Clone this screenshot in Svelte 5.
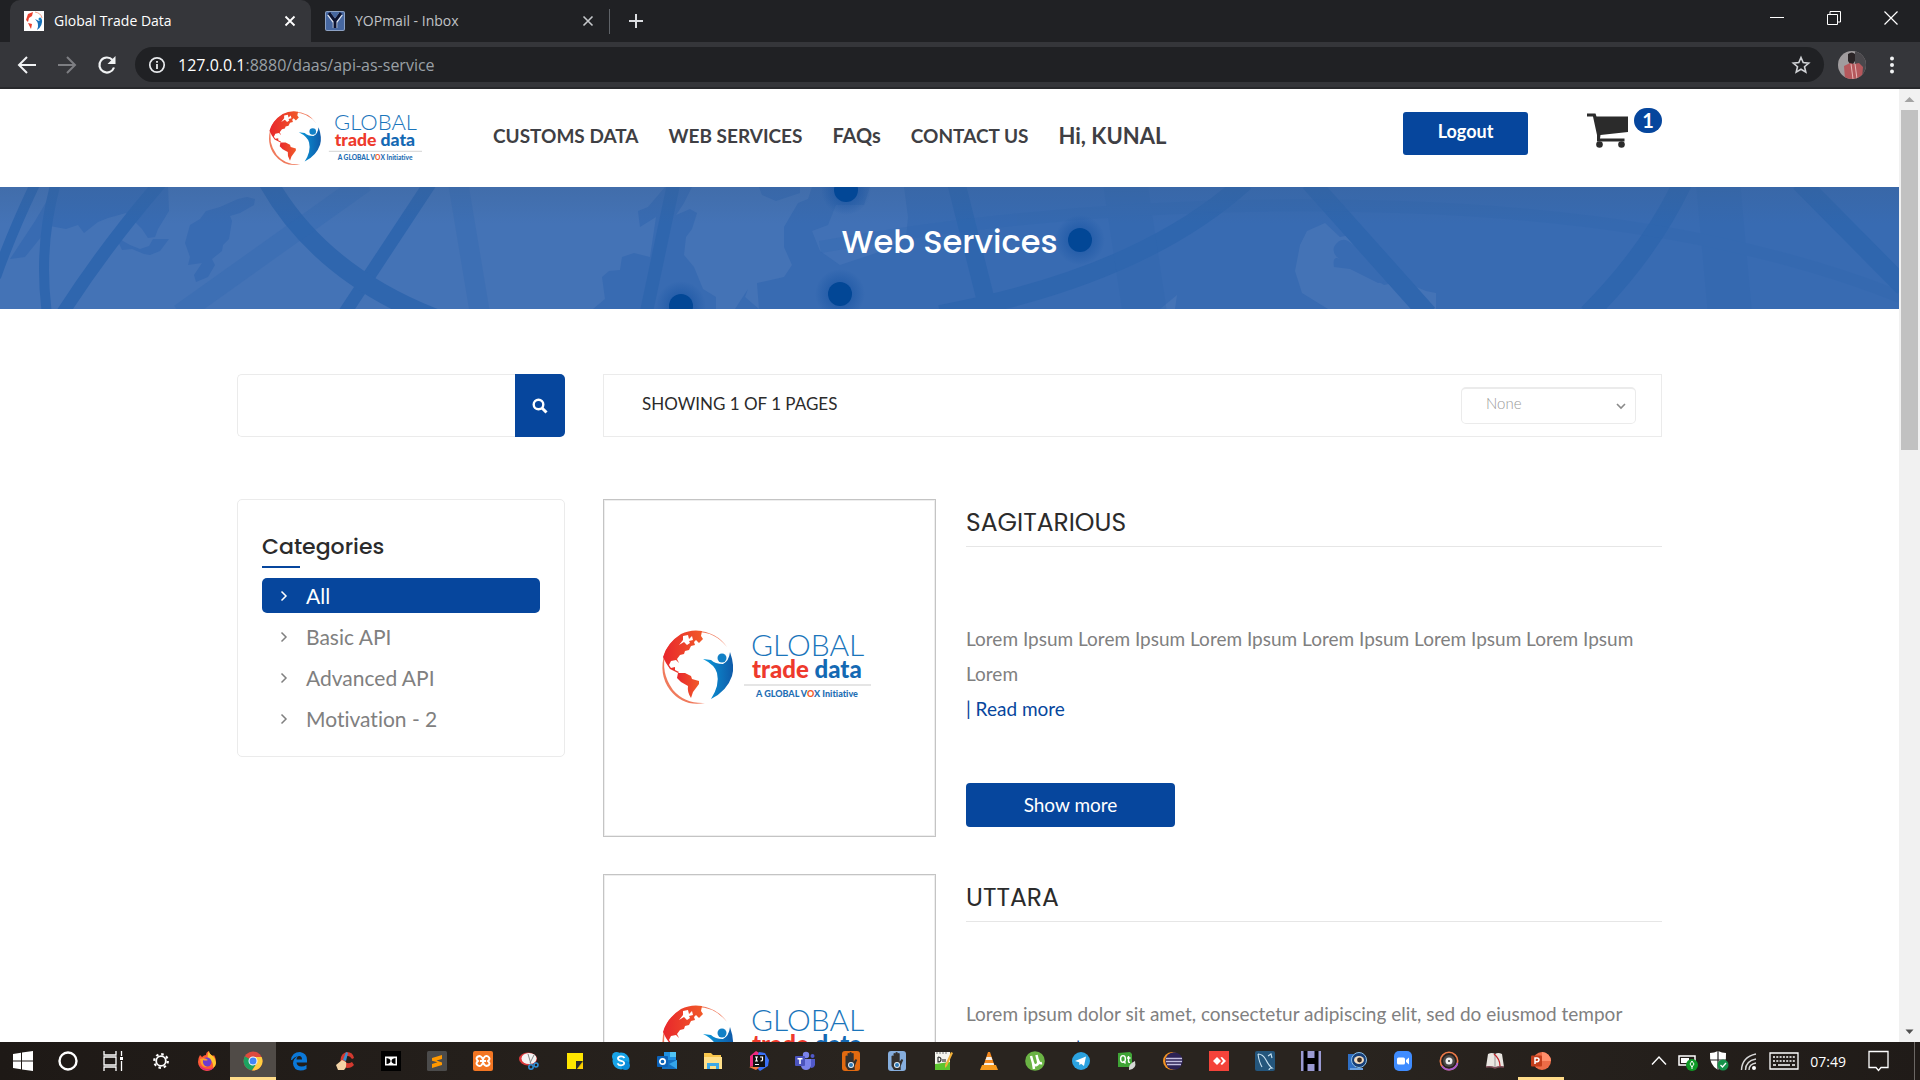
<script>
  const navLinks = [
    { label: 'CUSTOMS DATA', kind: '' },
    { label: 'WEB SERVICES', kind: '' },
    { label: 'FAQs', kind: 'faq' },
    { label: 'CONTACT US', kind: '' },
    { label: 'Hi, KUNAL', kind: 'hello' }
  ];

  const categories = ['All', 'Basic API', 'Advanced API', 'Motivation - 2'];
  let selected = $state('All');
  let query = $state('');
  let sort = $state('None');

  const products = [
    {
      name: 'SAGITARIOUS',
      text: 'Lorem Ipsum Lorem Ipsum Lorem Ipsum Lorem Ipsum Lorem Ipsum Lorem Ipsum Lorem',
      broken: true
    },
    {
      name: 'UTTARA',
      text: 'Lorem ipsum dolor sit amet, consectetur adipiscing elit, sed do eiusmod tempor incididunt ut',
      broken: false
    }
  ];

  const icon = (body) =>
    `<svg width="20" height="20" viewBox="0 0 20 20" fill="none" aria-hidden="true">${body}</svg>`;

  const hand = (bg) =>
    `<rect x="1" width="18" height="20" rx="3" fill="${bg}"/><path d="M4.500 11V5q1-1 2 0V9V2.500q1-1 2 0V8V1.500q1.200-1 2.200 0V8V2.500q1-1 2 0V10.500l2-2.500 1.500 1-2.500 6v4H7L4.500 15z" fill="#33302e"/><circle cx="10" cy="14" r="3" fill="#e8eef5"/><circle cx="10" cy="14" r="2" fill="#2b78b5"/>`;

  const system = [
    {
      name: 'Start',
      art: icon('<path d="M0 3l8-1.200v7.700H0zM9 1.600L20 0v9.500H9zM0 10.500h8v7.700L0 17zM9 10.500h11V20L9 18.400z" fill="#fff"/>')
    },
    { name: 'Cortana', art: icon('<circle cx="10" cy="10" r="8.500" stroke="#fff" stroke-width="2.400"/>') },
    {
      name: 'Task View',
      art: icon('<path d="M1 0v4h12V0M1 20v-4h12v4M1 6h12v8H1zM18.500 0v5M18.500 10v10" stroke="#fff" stroke-width="1.300"/><path d="M17 6h3v3h-3z" fill="#fff"/>')
    }
  ];

  const apps = [
    {
      name: 'Settings',
      art: icon('<circle cx="10" cy="10" r="4.800" stroke="#fff" stroke-width="1.800"/><circle cx="10" cy="10" r="6.800" stroke="#fff" stroke-width="2.200" stroke-dasharray="2.500 2.840"/>')
    },
    {
      name: 'Firefox',
      art: icon('<path d="M3 4l2 2q2-2 4-2 0-3 3-4 0 3 4 5l1-1q2 3 2 7a9 9 0 0 1-18 0q0-4 2-7z" fill="#ff5a36"/><path d="M12 0q0 3 4 5 3 3 3 7 0 3-3 5 1-7-5-9-1-5 1-8z" fill="#ffc72e"/><circle cx="10" cy="11" r="4.500" fill="#6f3bd1"/><path d="M3 8q5-2 8 1-3 1-5 0-1 5 4 7-6 1-7-8z" fill="#ffa02e"/><path d="M2 14q2 5 8 5.500 5 0 7-3-8 4-15-2.500z" fill="#e3267c"/>')
    },
    {
      name: 'Chrome',
      active: true,
      open: true,
      art: icon('<circle cx="10" cy="10" r="9.500" fill="#dd4b3e"/><path d="M10 10L1.800 5.300A9.500 9.500 0 0 0 9 19.500L14 12z" fill="#1da260"/><path d="M10 6h8.600A9.500 9.500 0 0 1 9 19.500L14 12z" fill="#ffcd40"/><circle cx="10" cy="10" r="4.500" fill="#fff"/><circle cx="10" cy="10" r="3.500" fill="#4285f4"/>')
    },
    {
      name: 'Edge',
      art: icon('<path d="M2 9q1-8 9-8 7 1 7 8v2.500H7.500q.5 4 5 4 2.500 0 5-1.500v4q-3 1.500-6 1.500-7-.5-7.500-7 0-5 5-7.500-4 1-6 4zM7.500 8.500H13q0-3.500-2.700-3.500-2.500.2-2.800 3.500z" fill="#0b78d8"/>')
    },
    {
      name: 'CCleaner',
      art: icon('<path d="M19 7q-1-6-7-6-6 1-6.500 8 .5 7 7 8 4 0 6.500-3l-2-3q-5 3-7-1-1-5 3-5 2 0 4 3z" fill="#d3392f"/><path d="M11 1l2 1-2 8-3-1z" fill="#3a8fd0"/><path d="M1 14l6-5 4 2q1 5-2 8H3z" fill="#f3d3a6"/>')
    },
    {
      name: 'Dolby',
      art: icon('<path d="M0 0h20v20H0z" fill="#000"/><path d="M4 5.500h12v9H4z" fill="#fff"/><path d="M5.500 7q4 .5 4 3t-4 3zM14.500 7q-4 .5-4 3t4 3z" fill="#000"/>')
    },
    {
      name: 'Sublime Text',
      art: icon('<rect width="20" height="20" rx="1.500" fill="#4b4b4b"/><path d="M5 7l10-3v4L9.500 9.600 15 11.500V14L5 17v-4l5.500-1.700L5 9.800z" fill="#ff9800"/>')
    },
    {
      name: 'XAMPP',
      art: icon('<rect width="20" height="20" rx="2" fill="#f37623"/><path d="M10 8.500q-2-4.500-5-3t0 4.500q-3 2.500 0 4.500t5-3q2 4.500 5 3t0-4.500q3-2.500 0-4.500t-5 3zM7 10h6" stroke="#fff" stroke-width="2"/>')
    },
    {
      name: 'Snipping Tool',
      art: icon('<ellipse cx="9" cy="8" rx="9" ry="6.500" fill="#d9383a"/><ellipse cx="10" cy="7.500" rx="7.500" ry="5.500" fill="#f3f3f3"/><path d="M9 3l3 10M15 4l-4 8" stroke="#888"/><circle cx="12" cy="16" r="2.200" stroke="#2d8fd8" stroke-width="1.500"/><circle cx="17" cy="14" r="2" stroke="#2d8fd8" stroke-width="1.500"/>')
    },
    {
      name: 'Sticky Notes',
      art: icon('<path d="M2 2h16v9l-6 7H2z" fill="#ffe600"/><path d="M11 18v-8h7l-6 8z" fill="#2a2a2a"/><path d="M18 11v7h-6z" fill="#ffd000"/>')
    },
    {
      name: 'Skype',
      art: icon('<circle cx="10" cy="10" r="8.500" fill="#18a4e8"/><circle cx="5.500" cy="5.500" r="4.500" fill="#18a4e8"/><circle cx="14.500" cy="14.500" r="4.500" fill="#0b8bd8"/><path d="M13.500 7q-1-1.800-3.600-1.700-3 .2-2.900 2.200 0 1.700 3 2.300t3.200 2.300q0 2-3 2.200-2.700 0-3.700-2" stroke="#fff" stroke-width="1.800"/>')
    },
    {
      name: 'Outlook',
      art: icon('<path d="M7 1h12v9H7z" fill="#1f8fe0"/><path d="M13 1h6v5h-6z" fill="#50c4f5"/><path d="M5 9l15 0v9H5z" fill="#1470c0"/><path d="M20 9v9L12 13z" fill="#35a5ea"/><rect y="5" width="11" height="11" rx="1" fill="#0c62b8"/><circle cx="5.500" cy="10.500" r="2.700" stroke="#fff" stroke-width="1.700"/>')
    },
    {
      name: 'File Explorer',
      art: icon('<path d="M1 2h7l2 2h8v14H1z" fill="#f8c64c"/><path d="M1 6h18v12H1z" fill="#ffe08a"/><path d="M4 18v-6h12v6h-3v-3H7v3z" fill="#3ca8e8"/>')
    },
    {
      name: 'IntelliJ IDEA',
      art: icon('<path d="M1 5L7 0l5 3-3 10-8 3z" fill="#f0287e"/><path d="M10 1l6 1 4 7-1 6-8 5-6-6z" fill="#3a70f5"/><path d="M0 16l7 3 6-5z" fill="#f47a3a"/><path d="M4 4h12v12H4z" fill="#111"/><path d="M6 6h3M7.500 6v4M6 10h3M11 6h2.500v3q0 1-2 1M6 13.500h4" stroke="#fff" stroke-width="1.200"/>')
    },
    {
      name: 'Teams',
      art: icon('<circle cx="11" cy="4" r="3.200" fill="#7b83eb"/><circle cx="17.500" cy="5" r="2" fill="#5059c9"/><path d="M13 8h7v6q-1 3-4 3z" fill="#5059c9"/><path d="M6 8h10v7q-1 4-5 4t-5-4z" fill="#7b83eb"/><rect y="5" width="10" height="10" rx="1" fill="#4b53bc"/><path d="M2.500 7.700h5M5 7.700v5.300" stroke="#fff" stroke-width="1.500"/>')
    },
    { name: 'Android Tool', art: icon(hand('#e26a10')) },
    { name: 'Android Viewer', art: icon(hand('#86aedd')) },
    {
      name: 'Notepad++',
      art: icon('<path d="M2 1h15v18H2z" fill="#f5f5ee"/><path d="M2 13l15-2v8H2z" fill="#5cc42e"/><path d="M4 1v2M7 1v2M10 1v2M13 1v2" stroke="#777"/><path d="M5 6v5q3 0 3-2.500T5 6M10 8v3M12 8v3" stroke="#333" stroke-width="1.200"/><path d="M18 1l2 1-6 13-2 2v-3z" fill="#f2b13a"/>')
    },
    {
      name: 'VLC',
      art: icon('<path d="M9 1h2l5 15H4z" fill="#f58a1f"/><path d="M7.600 6h4.800l1 3H6.500zM5.500 12h9l.8 2.500H4.600z" fill="#f4f0ea"/><path d="M3 14h14l2 5H1z" fill="#f79a1d"/>')
    },
    {
      name: 'uTorrent',
      art: icon('<circle cx="10" cy="10" r="9.800" fill="#6ab344"/><path d="M6 5l2 7q1 3 3.500 2T13 10l-1.500-6M13 9q1 4 4 3M8 12l1 6" stroke="#fff" stroke-width="2.500"/>')
    },
    {
      name: 'Telegram',
      art: icon('<circle cx="10" cy="10" r="9" fill="#2ba2df"/><path d="M4 10l11-4.500-2 9.500-3-2.200-1.500 1.500-.3-3z" fill="#fff"/>')
    },
    {
      name: 'Qt Creator',
      art: icon('<path d="M1 2l12-1 2 2v13H1z" fill="#3fa436"/><ellipse cx="6" cy="8" rx="2.400" ry="3.400" stroke="#fff" stroke-width="1.400"/><path d="M6.500 10l2 2.500M11.500 5v5.500q0 1 1.500.8M10 7h3.500" stroke="#fff" stroke-width="1.400"/><path d="M18 10q2 8-6 9-1-6 6-9z" fill="#d5d8d5"/>')
    },
    {
      name: 'Eclipse',
      art: icon('<circle cx="9" cy="10" r="9" fill="#f39422"/><circle cx="11" cy="10" r="8.800" fill="#2c2255"/><path d="M3 7.500h16M3 10.500h16M4 13.500h14" stroke="#c4bfe0" stroke-width="1.700"/>')
    },
    {
      name: 'AnyDesk',
      art: icon('<path d="M0 0h20v20H0z" fill="#f4433a"/><path d="M8 6l4 4-4 4-4-4zM11.500 6.500L13 6l4 4-4 4-1.500-1L14 10z" fill="#fff"/>')
    },
    {
      name: 'MySQL Workbench',
      art: icon('<rect width="20" height="20" rx="2" fill="#24567c"/><path d="M3 3q5 0 8 6t6 8q-3 0-3 2M3 3q1 8 4 13M13 5l3-2 1 4" stroke="#c9e3f2" stroke-width="1.100"/>')
    },
    {
      name: 'HeidiSQL',
      art: icon('<path d="M0 0h20v20H0z" fill="#000"/><path d="M0 0h2.500v20H0zM6.500 0h7v7h-7zM6.500 13h7v7h-7zM17.500 0H20v20h-2.500z" fill="#9a9ad2"/>')
    },
    {
      name: 'Screen Viewer',
      art: icon('<path d="M1 3h8v16H1z" fill="#2f6fc4"/><circle cx="12" cy="9" r="7.500" fill="#173f78" stroke="#8cc0e8"/><ellipse cx="12" cy="9" rx="5" ry="4" fill="#f2dcc0"/><circle cx="12.500" cy="9" r="2.400" fill="#3a2a20"/><path d="M3 18h13" stroke="#6aa0e0" stroke-width="2"/>')
    },
    {
      name: 'Zoom',
      art: icon('<rect x="1" width="18" height="20" rx="5" fill="#3f8cff"/><rect x="4" y="6.500" width="8" height="7" rx="1.500" fill="#fff"/><path d="M13 9l3-2.500v7L13 11z" fill="#fff"/>')
    },
    {
      name: 'Groove Music',
      art: icon('<circle cx="10" cy="10" r="8.700" stroke="#ee7a48" stroke-width="1.600"/><path d="M3 15a8.700 8.700 0 0 0 15.500-3" stroke="#a55bd0" stroke-width="1.800"/><circle cx="10" cy="10" r="6" fill="#4c4a48"/><circle cx="10" cy="10" r="3.500" fill="#eee"/><circle cx="10" cy="10" r="1" fill="#333"/>')
    },
    {
      name: 'Dictionary',
      art: icon('<path d="M3 3q4-2 7 0 3-2 7 0l2 13q-5-1-9 1-4-2-9-1z" fill="#e9e6e1"/><path d="M10 3v13" stroke="#999"/><path d="M9 3q6 5 6 12" stroke="#c2262c" stroke-width="1.300"/><path d="M1 16q5-1 9 1 4-2 9-1" stroke="#7a4a55" stroke-width="1.500"/>')
    },
    {
      name: 'PowerPoint',
      open: true,
      art: icon('<circle cx="11" cy="10" r="9" fill="#ed6c47"/><path d="M11 1a9 9 0 0 1 9 9h-9z" fill="#ff8f6b"/><rect y="4.500" width="11" height="11" rx="1" fill="#c43e1c"/><path d="M4 13V7h2q2 0 2 1.800T6 10.700H4" stroke="#fff" stroke-width="1.500"/>')
    }
  ];
</script>

{#snippet logo(id)}
  <svg class="logo" viewBox="0 0 210 74" role="img" aria-label="Global Trade Data">
    <defs>
      <linearGradient id="{id}-land" x1="0" x2="1">
        <stop offset="0" stop-color="#e8262c" />
        <stop offset="1" stop-color="#f15a29" />
      </linearGradient>
      <linearGradient id="{id}-body" x1="0" x2="1">
        <stop offset="0" stop-color="#0a9bdc" />
        <stop offset="1" stop-color="#0f5aa8" />
      </linearGradient>
    </defs>
    <path d="M66 17A36 36 0 0 0 36 1Q14 2 4 22Q-3 44 9 60Q22 77 44 73Q24 74 12 60Q-1 42 5 22Q15 2 36 2Q54 2 66 17z" fill="#f07a5c" />
    <path
      d="M20 4Q30-1 41 1L40 6L42 9L38 13L35 10L33 12L34 15L30 16L28 20L24 21L23 24L19 25L16 29L18 33L15 30L10 31L8 35L10 38L14 37L14 40L18 42L17 43L9 39L5 33L2 27Q6 13 20 4z"
      fill="url(#{id}-land)"
    />
    <path d="M22 6l5-1 1 4 3-3 1 4-4 1 1 2-3 2-3-3-5 3 4-5z" fill="#fff" />
    <path d="M17 43L24 43L30 46L31 49L38 51L38 54L35 58L32 62L30 68Q26 62 27 56L20 52L16 48z" fill="url(#{id}-land)" />
    <circle cx="61" cy="28" r="4.500" fill="#1280c6" />
    <path
      d="M42 29L50 30Q54 34 62 34Q68 31 69 22Q74 36 71 46Q66 61 50 69Q59 55 56 43Q54 35 42 29z"
      fill="url(#{id}-body)"
    />
    <text x="90" y="26" class="global">GLOBAL</text>
    <text x="91" y="48" class="trade">trade <tspan fill="#1469b3">data</tspan></text>
    <path d="M83 55h127" stroke="#dcdcdc" stroke-width="1.500" />
    <text x="95" y="67" class="tagline">A GLOBAL V<tspan fill="#f15a29">O</tspan>X Initiative</text>
  </svg>
{/snippet}

<div class="screen">
  <header class="browser">
    <div class="tabs">
      <div class="tab current">
        <svg width="20" height="20" viewBox="0 0 20 20" aria-hidden="true">
          <path d="M0 0h20v20H0z" fill="#fff" />
          <path d="M4 3l5-2-1 4-3 2-1 4-2-2zM4 12l4 1-1 5z" fill="#e9402f" />
          <path d="M11 1q6 1 7 6" stroke="#f3a08c" fill="none" />
          <circle cx="16" cy="8" r="1.500" fill="#1682c8" />
          <path d="M11 8l4 2 3-2q1 7-5 11 3-6-2-11z" fill="#1670b8" />
        </svg>
        <span class="tab-title">Global Trade Data</span>
        <button class="plain" aria-label="Close Global Trade Data">
          <svg width="14" height="14" viewBox="0 0 14 14"><path d="M2.500 2.500l9 9M11.500 2.500l-9 9" stroke="#fff" stroke-width="1.800" /></svg>
        </button>
      </div>
      <div class="tab">
        <svg width="20" height="20" viewBox="0 0 20 20" aria-hidden="true">
          <rect width="20" height="20" rx="2" fill="#8da2c4" />
          <rect x="1" y="1" width="18" height="18" rx="1" fill="#4667a0" />
          <path d="M4 3l6 8 6-8M10 10v7" stroke="#dfe6f2" stroke-width="4.500" fill="none" />
          <path d="M4 2l6 8 6-8M10 10v7" stroke="#0b1230" stroke-width="3" fill="none" />
        </svg>
        <span class="tab-title">YOPmail - Inbox</span>
        <button class="plain" aria-label="Close YOPmail">
          <svg width="14" height="14" viewBox="0 0 14 14"><path d="M2.500 2.500l9 9M11.500 2.500l-9 9" stroke="#c6c8cb" stroke-width="1.600" /></svg>
        </button>
      </div>
      <span class="tab-divider"></span>
      <button class="plain new-tab" aria-label="New tab">
        <svg width="16" height="16" viewBox="0 0 16 16"><path d="M8 1v14M1 8h14" stroke="#dcdee1" stroke-width="2" /></svg>
      </button>
      <div class="window-controls">
        <button class="plain" aria-label="Minimize">
          <svg width="14" height="14" viewBox="0 0 14 14"><path d="M0 6.500h14" stroke="#fff" /></svg>
        </button>
        <button class="plain" aria-label="Restore">
          <svg width="14" height="14" viewBox="0 0 14 14"><path d="M.5 3.500h10v10H.5zM3 3V.5h10.500V11H11" stroke="#fff" fill="none" /></svg>
        </button>
        <button class="plain" aria-label="Close window">
          <svg width="14" height="14" viewBox="0 0 14 14"><path d="M.5.5l13 13M13.500.5l-13 13" stroke="#fff" stroke-width="1.200" /></svg>
        </button>
      </div>
    </div>
    <div class="toolbar">
      <button class="plain" aria-label="Back">
        <svg width="20" height="20" viewBox="0 0 20 20"><path d="M19 10H3M10 2l-8 8 8 8" stroke="#f1f3f4" stroke-width="2" fill="none" /></svg>
      </button>
      <button class="plain" aria-label="Forward">
        <svg width="20" height="20" viewBox="0 0 20 20"><path d="M1 10h16M10 2l8 8-8 8" stroke="#7d7e82" stroke-width="2" fill="none" /></svg>
      </button>
      <button class="plain" aria-label="Reload">
        <svg width="20" height="20" viewBox="0 0 20 20"><path d="M17 12.500A7.500 7.500 0 1 1 15.500 5" stroke="#f1f3f4" stroke-width="2.200" fill="none" /><path d="M18.500 1v8h-8z" fill="#f1f3f4" /></svg>
      </button>
      <div class="address">
        <svg width="18" height="18" viewBox="0 0 18 18" aria-hidden="true">
          <circle cx="9" cy="9" r="7.200" stroke="#e8eaed" stroke-width="1.700" fill="none" />
          <path d="M9 8v5M9 5v1.800" stroke="#e8eaed" stroke-width="1.800" />
        </svg>
        <span class="url"><b>127.0.0.1</b>:8880/daas/api-as-service</span>
        <button class="plain" aria-label="Bookmark this page">
          <svg width="20" height="20" viewBox="0 0 20 20"><path d="M10 2.500l2.200 5.100 5.500.5-4.200 3.600 1.300 5.400-4.800-2.900-4.800 2.900 1.300-5.400-4.200-3.600 5.500-.5z" stroke="#d0d2d5" stroke-width="1.600" fill="none" /></svg>
        </button>
      </div>
      <div class="toolbar-end">
        <button class="plain" aria-label="Profile">
          <svg width="28" height="28" viewBox="0 0 28 28">
            <defs><clipPath id="face"><circle cx="14" cy="14" r="14" /></clipPath></defs>
            <g clip-path="url(#face)">
              <path d="M0 0h28v28H0z" fill="#a09c9e" />
              <path d="M17 0h11v28H17z" fill="#4a484c" />
              <path d="M10 3q4-3 7 0v7l-2 3h-3l-2-3z" fill="#2a2426" />
              <path d="M6 15l6-3 4 1 5-1 4 4-1 12H7z" fill="#b5585c" />
              <path d="M13 13l2 15M17 13l2 15" stroke="#e5b8b8" />
            </g>
          </svg>
        </button>
        <button class="plain" aria-label="Menu">
          <svg width="20" height="20" viewBox="0 0 20 20" fill="#f1f3f4"><circle cx="10" cy="3.500" r="2" /><circle cx="10" cy="10" r="2" /><circle cx="10" cy="16.500" r="2" /></svg>
        </button>
      </div>
    </div>
  </header>

  <div class="viewport">
    <main class="page">
      <div class="site-header">
        <div class="container header-row">
          <a class="brand" href="#home">{@render logo('brand')}</a>
          <nav>
            {#each navLinks as link}
              <a href="#{link.label}" class={link.kind}>{link.label}</a>
            {/each}
          </nav>
          <button class="primary logout">Logout</button>
          <a class="cart" href="#cart" aria-label="Cart, 1 item">
            <svg width="41" height="35" viewBox="0 0 41 35" fill="#2b2b2b" aria-hidden="true">
              <path d="M0 .5h8.500l1 3H41V19l-27.500 3-.5 3.500h24.500v3H10V22L6 3.500H0z" />
              <circle cx="12.500" cy="31.500" r="3.300" />
              <circle cx="34.500" cy="31.500" r="3.300" />
            </svg>
            <span class="badge">1</span>
          </a>
        </div>
      </div>

      <section class="banner">
        <svg class="banner-art" viewBox="0 0 1899 122" preserveAspectRatio="none" aria-hidden="true">
          <defs>
            <linearGradient id="shade" x1="0" y1="0" x2="0" y2="1">
              <stop offset="0" stop-color="#3a5f8f" stop-opacity=".3" />
              <stop offset=".3" stop-color="#3a5f8f" stop-opacity="0" />
            </linearGradient>
            <radialGradient id="glow">
              <stop offset=".35" stop-color="#0a4a9c" stop-opacity=".45" />
              <stop offset="1" stop-color="#0a4a9c" stop-opacity="0" />
            </radialGradient>
          </defs>
          <path d="M0 0h1899v122H0z" fill="#4473b6" />
          <g fill="#386bb2">
            <path d="M55 0H168L169 24L158 42L155 50L148 51L142 42L126 26L108 31L98 35L84 46L78 38L66 42L50 39L25 70L10 72L35 34z" />
            <path d="M116 50L130 58L140 62L149 59L153 52L169 52L160 64L150 68L144 67L132 62L122 63z" />
            <path d="M200 32L206 24L220 20L238 12L247 10L255 12L254 18L240 26L230 29L232 34L229 52L223 58L222 64L212 72L215 78L208 90L196 95L194 88L202 76L188 78L190 70L185 56L190 38z" />
            <path d="M665 0H692L684 16L676 28L690 22L697 26L692 42L686 50L684 68L694 80L703 102L716 110V122H593L605 112L602 90L609 84L620 83L622 70L634 66L650 70L656 30L640 40L638 24L648 20z" />
            <path d="M759 0H800V6L776 14L762 8zM812 0H1899V122H735L748 102L745 110L759 122L757 96L784 90L792 78L784 60L784 40L798 16L808 12z" />
          </g>
          <path d="M870 0h34l4 30-2 22-30 14-36 12-20-14-8-20 16-6 8-20h28z" fill="#4473b6" opacity=".8" />
          <path d="M1325 36L1307 44L1300 58L1295 84L1302 106L1328 122H1436V106L1426 104L1402 94L1384 98L1364 86L1372 68L1350 48L1340 50z" fill="#4473b6" />
          <path d="M1334 60q6-10 14-6l52 38-22 4-28-14-16-2q-2-12 6-8-8-4-6-12z" fill="#386bb2" />
          <path d="M1160 122l17-14-2 14z" fill="#4473b6" />
          <g fill="none" stroke="#2f66ae">
            <path d="M36-5Q12 45-4 90M56-5Q38 60 47 127" stroke-width="10" />
            <path d="M161-5Q105 60 62 127M431-5L344 127" stroke-width="13" />
            <path d="M268-5Q322 90 445 135" stroke-width="19" />
            <path d="M674-5Q660 60 646 127" stroke-width="13" />
            <path d="M956-5L988 122M940 127Q1140 90 1245-5" stroke-width="18" />
            <path d="M1310-5L1428 127M1683-5Q1650 65 1588 127M1800-5L1904 100" stroke-width="19" />
          </g>
          <g fill="none" stroke="#2f66ae" opacity=".3">
            <path d="M365-5L180 127M458-5L480 127" stroke-width="20" />
            <path d="M1125-5L1145 127M1718-5L1730 127" stroke-width="44" />
            <path d="M820 60Q1100 10 1400 20T1900 110" stroke-width="12" />
          </g>
          <path d="M0 0h1899v122H0z" fill="url(#shade)" />
          {#each [[846, 3], [1080, 53], [840, 107], [681, 119]] as [x, y]}
            <circle cx={x} cy={y} r="25" fill="url(#glow)" />
            <circle cx={x} cy={y} r="12" fill="#024796" />
          {/each}
        </svg>
        <h1>Web Services</h1>
      </section>

      <div class="container body-grid">
        <form class="search" onsubmit={(e) => e.preventDefault()}>
          <input type="text" aria-label="Search services" bind:value={query} />
          <button class="primary" aria-label="Search">
            <svg width="16" height="16" viewBox="0 0 16 16"><circle cx="6.500" cy="6.500" r="4.800" stroke="#fff" stroke-width="2.400" fill="none" /><path d="M10 10l4.500 4.500" stroke="#fff" stroke-width="3" /></svg>
          </button>
        </form>

        <div class="result-bar">
          <span>SHOWING 1 OF 1 PAGES</span>
          <div class="select">
            <select aria-label="Sort by" bind:value={sort}>
              <option>None</option>
              <option>Name</option>
            </select>
            <svg width="10" height="8" viewBox="0 0 10 8" aria-hidden="true"><path d="M1 2l4 4 4-4" stroke="#8a8a8a" stroke-width="1.600" fill="none" /></svg>
          </div>
        </div>

        <aside>
          <h2>Categories</h2>
          <ul>
            {#each categories as name}
              <li>
                <button class:chosen={selected === name} onclick={() => (selected = name)}>
                  <svg width="8" height="12" viewBox="0 0 8 12" aria-hidden="true"><path d="M1.500 1.500L6 6l-4.500 4.500" stroke="currentColor" stroke-width="1.500" fill="none" /></svg>
                  {name}
                </button>
              </li>
            {/each}
          </ul>
        </aside>

        <div class="products">
          {#each products as product, i}
            <article>
              <div class="picture">{@render logo('card' + i)}</div>
              <div class="details">
                <h3>{product.name}</h3>
                <p>
                  {product.text}
                  {#if product.broken}<br />{/if}
                  <a href="#more-{i}">| Read more</a>
                </p>
                <button class="primary show-more">Show more</button>
              </div>
            </article>
          {/each}
        </div>
      </div>
    </main>

    <div class="scrollbar" aria-hidden="true">
      <svg width="21" height="21" viewBox="0 0 21 21"><path d="M5.500 13L10.500 8l5 5z" fill="#a3a3a3" /></svg>
      <div class="track"><div class="thumb"></div></div>
      <svg width="21" height="21" viewBox="0 0 21 21"><path d="M6.500 8.500h8l-4 4.500z" fill="#505050" /></svg>
    </div>
  </div>

  <footer class="taskbar">
    <div class="system">
      {#each system as item}
        <button class="task" aria-label={item.name}>{@html item.art}</button>
      {/each}
    </div>
    <div class="apps">
      {#each apps as app}
        <button class="task" class:active={app.active} class:open={app.open} aria-label={app.name}>{@html app.art}</button>
      {/each}
    </div>
    <div class="tray">
      <svg width="16" height="20" viewBox="0 0 16 20"><path d="M1 13.500L8 6l7 7.500" stroke="#fff" stroke-width="1.400" fill="none" /></svg>
      <svg width="20" height="20" viewBox="0 0 20 20">
        <path d="M1 5h16v9H1z" stroke="#fff" stroke-width="1.500" fill="none" /><path d="M3 7h8v5H3z" fill="#fff" />
        <circle cx="14" cy="14" r="6" fill="#0f9a26" /><path d="M14 10l2 3-2 3-2-3zM14 15v3" stroke="#fff" fill="none" />
      </svg>
      <svg width="20" height="20" viewBox="0 0 20 20">
        <path d="M9 0q4 2 8 2 1 12-8 17Q0 14 1 2q4 0 8-2z" fill="#fff" /><path d="M9 0v19M1 9h16" stroke="#222" stroke-width="1.200" />
        <circle cx="14" cy="14" r="5.500" fill="#15924a" /><path d="M11.500 14l2 2 3.500-4" stroke="#fff" stroke-width="1.300" fill="none" />
      </svg>
      <svg width="18" height="20" viewBox="0 0 18 20">
        <circle cx="14" cy="17" r="2" fill="#fff" />
        <path d="M9 19q0-6 7-7M5.500 19q0-9 10.500-11M1.500 19Q2 6 16 3" stroke="#d8d8d8" stroke-width="1.400" fill="none" />
      </svg>
      <svg width="30" height="20" viewBox="0 0 30 20">
        <path d="M1 2h28v16H1z" stroke="#fff" stroke-width="1.300" fill="none" />
        <path d="M4 6h22M4 10h22" stroke="#fff" stroke-width="1.500" stroke-dasharray="2 1.300" /><path d="M4 14h3M9 14h12M23 14h3" stroke="#fff" stroke-width="1.400" />
      </svg>
      <time>07:49</time>
      <svg width="22" height="22" viewBox="0 0 22 22"><path d="M1 1.500h19v16h-7l-2.500 3-2.500-3H1z" stroke="#fff" stroke-width="1.300" fill="none" /></svg>
    </div>
    <span class="desktop-edge"></span>
  </footer>
</div>

<style>
  :global(body) {
    background: #fff;
  }
  * {
    box-sizing: border-box;
  }
  button,
  input,
  select {
    font: inherit;
    margin: 0;
  }
  svg {
    display: block;
    flex: none;
  }
  .screen {
    --blue: #06469d;
    --line: #ebebeb;
    height: 100vh;
    display: flex;
    flex-direction: column;
    overflow: hidden;
    font-family: Lato, 'Open Sans', sans-serif;
    font-variant-ligatures: none;
  }
  .plain {
    border: 0;
    padding: 0;
    background: none;
    display: flex;
    align-items: center;
    justify-content: center;
  }

  /* Browser window */
  .browser {
    flex: none;
    background: #35363a;
    border-bottom: 2px solid #28292c;
    font-family: 'Open Sans', sans-serif;
  }
  .tabs {
    height: 42px;
    padding-left: 10px;
    display: flex;
    align-items: center;
    background: #202124;
  }
  .tab {
    flex: 0 1 298px;
    height: 42px;
    padding: 0 14px;
    display: flex;
    align-items: center;
    gap: 10px;
    color: #c0c3c7;
    font-size: 14px;
  }
  .tab.current {
    flex-basis: 301px;
    background: #35363a;
    border-radius: 10px 10px 0 0;
    color: #fff;
  }
  .tab-title {
    flex: 1;
    padding-bottom: 2px;
    white-space: nowrap;
  }
  .tab-divider {
    width: 1px;
    height: 25px;
    background: #5f6368;
  }
  .new-tab {
    margin-left: 18px;
  }
  .window-controls {
    margin-left: auto;
    height: 36px;
    display: flex;
    align-self: flex-start;
    padding-right: 1px;
  }
  .window-controls button {
    width: 57px;
  }
  .toolbar {
    display: flex;
    align-items: center;
    gap: 20px;
    padding: 5px 18px 5px 17px;
  }
  .toolbar-end {
    display: flex;
    align-items: center;
    gap: 16px;
    margin-left: -6px;
  }
  .address {
    flex: 1;
    height: 35px;
    margin-left: -2px;
    padding: 0 13px;
    border-radius: 18px;
    background: #202124;
    display: flex;
    align-items: center;
    gap: 12px;
    color: #9aa0a6;
    font-size: 16px;
  }
  .url {
    flex: 1;
  }
  .url b {
    color: #fff;
    font-weight: 400;
  }

  /* Page */
  .viewport {
    flex: 1;
    min-height: 0;
    display: flex;
  }
  .page {
    flex: 1;
    min-width: 0;
    overflow: hidden;
    color: #2b2b2b;
  }
  .container {
    max-width: 1425px;
    margin: 0 auto;
  }
  .header-row {
    display: flex;
    align-items: flex-start;
    height: 98px;
    padding: 19px 0 0 31px;
  }
  .brand {
    width: 154px;
    padding-top: 3px;
  }
  .logo {
    width: 100%;
    overflow: visible;
  }
  .logo .global {
    font-size: 30px;
    font-weight: 300;
    fill: #1a75bb;
  }
  .logo .trade {
    font-size: 24px;
    font-weight: 900;
    fill: #ee3a2c;
  }
  .logo .tagline {
    font-size: 9px;
    font-weight: 900;
    fill: #1f6fb4;
  }
  nav {
    flex: 1;
    display: flex;
    align-items: center;
    gap: 30px;
    height: 54px;
    margin-left: 71px;
    font-size: 19px;
    font-weight: 700;
    white-space: nowrap;
  }
  nav a {
    color: #3f3f44;
    text-decoration: none;
  }
  nav .faq {
    font-size: 20px;
  }
  nav .hello {
    font-size: 22px;
  }
  .primary {
    border: 0;
    background: var(--blue);
    color: #fff;
  }
  .logout {
    width: 125px;
    height: 43px;
    margin-top: 4px;
    padding: 0 0 5px;
    border-radius: 3px;
    font-size: 18px;
    font-weight: 700;
  }
  .cart {
    display: flex;
    align-items: flex-start;
    gap: 6px;
    margin-left: 59px;
    text-decoration: none;
  }
  .cart svg {
    margin-top: 5px;
  }
  .badge {
    width: 28px;
    height: 25px;
    border-radius: 13px;
    background: var(--blue);
    color: #fff;
    font-size: 20px;
    font-weight: 700;
    line-height: 25px;
    text-align: center;
  }
  .banner {
    display: grid;
    height: 122px;
    place-items: center;
  }
  .banner > * {
    grid-area: 1 / 1;
  }
  .banner-art {
    width: 100%;
    height: 122px;
  }
  h1,
  h2,
  h3 {
    margin: 0;
    font-family: Poppins, Inter, sans-serif;
    font-weight: 500;
  }
  h1 {
    margin-bottom: 12px;
    color: #fff;
    font-size: 32px;
    line-height: 40px;
    z-index: 1;
  }
  .body-grid {
    display: grid;
    grid-template-columns: 328px minmax(0, 1fr);
    column-gap: 38px;
    row-gap: 62px;
    align-items: start;
    padding-top: 65px;
  }
  .search {
    display: flex;
    height: 63px;
  }
  .search input {
    flex: 1;
    min-width: 0;
    padding: 0 20px;
    border: 1px solid var(--line);
    border-right: 0;
    border-radius: 5px 0 0 5px;
    font-size: 18px;
  }
  .search button {
    width: 50px;
    display: flex;
    align-items: center;
    justify-content: center;
    border-radius: 0 5px 5px 0;
  }
  .result-bar {
    height: 63px;
    padding: 0 25px 0 38px;
    display: flex;
    align-items: center;
    justify-content: space-between;
    border: 1px solid var(--line);
    font-size: 17px;
  }
  .result-bar > span {
    padding-bottom: 4px;
  }
  .select {
    display: grid;
    align-items: center;
  }
  .select > * {
    grid-area: 1 / 1;
  }
  .select svg {
    justify-self: end;
    margin-right: 10px;
    pointer-events: none;
  }
  .select select {
    width: 175px;
    height: 37px;
    padding: 0 24px 6px;
    appearance: none;
    border: 1px solid var(--line);
    border-top-width: 2px;
    border-radius: 5px;
    background: #fff;
    color: #999;
    font-size: 15px;
    font-weight: 300;
  }
  aside {
    padding: 30px 24px 20px;
    border: 1px solid var(--line);
    border-radius: 5px;
  }
  h2 {
    font-size: 22px;
    line-height: 34px;
  }
  h2::after {
    content: '';
    display: block;
    width: 38px;
    height: 2px;
    margin-top: 2px;
    background: var(--blue);
  }
  ul {
    margin: 10px 0 0;
    padding: 0;
    display: grid;
    gap: 6px;
    list-style: none;
  }
  li button {
    width: 100%;
    height: 35px;
    padding: 0 18px;
    display: flex;
    align-items: center;
    gap: 18px;
    border: 0;
    border-radius: 5px;
    background: none;
    color: #808080;
    font-size: 21px;
  }
  li button.chosen {
    background: var(--blue);
    color: #fff;
  }
  .products {
    display: grid;
    gap: 37px;
  }
  article {
    display: flex;
    gap: 30px;
  }
  .picture {
    width: 333px;
    height: 338px;
    padding: 0 8px 3px 0;
    display: grid;
    place-items: center;
    border: 1px solid #c4c4c4;
    outline: 1px solid #eee;
    outline-offset: -2px;
  }
  .picture .logo {
    width: 210px;
  }
  .details {
    flex: 1;
    min-width: 0;
  }
  h3 {
    padding: 7px 0 6px;
    border-bottom: 1px solid #e6e6e6;
    font-size: 25px;
    font-weight: 400;
    line-height: 34px;
  }
  p {
    margin: 74px 0 0;
    padding-right: 10px;
    color: #808080;
    font-size: 19px;
    line-height: 35px;
  }
  p a {
    color: var(--blue);
    text-decoration: none;
  }
  .show-more {
    width: 209px;
    height: 44px;
    margin-top: 57px;
    padding: 0 0 2px;
    border-radius: 4px;
    font-size: 19px;
  }
  .scrollbar {
    flex: none;
    width: 21px;
    display: flex;
    flex-direction: column;
    background: #f1f1f1;
  }
  .track {
    flex: 1;
    padding: 0 2px;
  }
  .thumb {
    height: 340px;
    background: #c1c1c1;
  }

  /* Taskbar */
  .taskbar {
    flex: none;
    height: 38px;
    display: flex;
    background: linear-gradient(90deg, #1e1916, #29241f 45%, #29241f 70%, #201b18);
  }
  .system,
  .apps {
    display: flex;
  }
  .system {
    margin-right: 3px;
  }
  .task {
    width: 46px;
    padding: 0;
    display: grid;
    place-items: center;
    border: 0;
    background: none;
  }
  .system .task {
    width: 45px;
  }
  .task.open {
    border-bottom: 3px solid #ffdc8a;
    padding-top: 3px;
  }
  .task.active {
    background: #504b47;
  }
  .tray {
    margin-left: auto;
    padding-right: 24px;
    display: flex;
    align-items: center;
    gap: 11px;
    color: #fff;
    font-family: 'Open Sans', sans-serif;
    font-size: 14px;
  }
  .tray svg:last-child {
    margin-left: 11px;
  }
  .desktop-edge {
    width: 6px;
    border-left: 1px solid #6b6764;
  }
</style>
